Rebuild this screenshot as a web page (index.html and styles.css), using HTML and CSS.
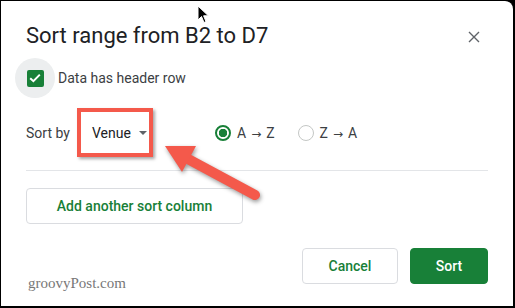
FILE: index.html
```html
<!DOCTYPE html>
<html lang="en">

<head>
    <meta charset="UTF-8">
    <meta name="viewport" content="width=device-width, initial-scale=1.0">
    <title>Sort range</title>
    <link rel="stylesheet" href="styles.css">
</head>

<body>
    <div class="dialog">
        <div class="header">
            <h1>Sort range from B2 to D7</h1>
            <svg class="close" width="12" height="12" viewBox="0 0 12 12">
                <path d="M1 1 L11 11 M11 1 L1 11" stroke="#5f6368" stroke-width="1.4" fill="none" />
            </svg>
        </div>

        <label class="check-row">
            <span class="halo">
                <span class="checkbox">
                    <svg width="12" height="10" viewBox="0 0 12 10">
                        <path d="M1.2 5.2 L4.4 8.2 L10.8 1.6" stroke="#fff" stroke-width="2" fill="none" />
                    </svg>
                </span>
            </span>
            Data has header row
        </label>

        <div class="sort-row">
            <span class="sort-label">Sort by</span>
            <div class="dropdown">
                <span>Venue</span>
                <span class="caret"></span>
            </div>
            <div class="radios">
                <span class="radio checked"></span>
                <span class="radio-label">A<span class="arrow">→</span>Z</span>
                <span class="radio"></span>
                <span class="radio-label">Z<span class="arrow">→</span>A</span>
            </div>
        </div>

        <hr class="divider">

        <button class="btn add">Add another sort column</button>

        <div class="footer">
            <button class="btn">Cancel</button>
            <button class="btn primary">Sort</button>
        </div>

        <span class="watermark">groovyPost.com</span>

        <svg class="annotation" width="515" height="308" viewBox="0 0 515 308">
            <line x1="255" y1="195" x2="188" y2="159" stroke="#f4594b" stroke-width="10" stroke-linecap="round" />
            <polygon points="165,146 196,146 182,172" fill="#f4594b" />
        </svg>

        <svg class="cursor" width="14" height="20" viewBox="0 0 14 20">
            <path d="M1 1 L1 15 L4.5 11.5 L7 17.5 L9 16.6 L6.6 10.8 L11.4 10.8 Z" fill="#000" stroke="#fff" stroke-width="1" />
        </svg>
    </div>
</body>

</html>
```

FILE: styles.css
```css
body {
    margin: 0;
    background-color: #000;
    font-family: 'Roboto', 'Liberation Sans', sans-serif;
    color: #3c4043;
}

.dialog {
    position: relative;
    box-sizing: border-box;
    width: 512px;
    height: 305px;
    margin: 1px 2px 2px 1px;
    padding: 20px 25px 0 25px;
    background-color: #fff;
    border-top-right-radius: 8px;
    overflow: hidden;
}

.header {
    display: flex;
    justify-content: space-between;
    align-items: center;
}

h1 {
    margin: 0;
    font-size: 22px;
    line-height: 30px;
    font-weight: 400;
    color: #202124;
}

.close {
    margin-right: 8px;
    margin-top: 2px;
}

.check-row {
    display: flex;
    align-items: center;
    margin: 7px 0 0 -11px;
    font-size: 14px;
    color: #3c4043;
}

.halo {
    display: flex;
    justify-content: center;
    align-items: center;
    width: 40px;
    height: 40px;
    border-radius: 50%;
    background-color: #eceeef;
    margin-right: 3px;
}

.checkbox {
    display: flex;
    justify-content: center;
    align-items: center;
    width: 17px;
    height: 17px;
    border-radius: 2px;
    background-color: #188038;
}

.sort-row {
    display: flex;
    align-items: center;
    margin-top: 10px;
    font-size: 14px;
}

.sort-label {
    width: 51px;
}

.dropdown {
    display: flex;
    align-items: center;
    box-sizing: border-box;
    width: 76px;
    height: 49px;
    padding-left: 11px;
    border: 4px solid #f4594b;
    box-shadow: 2px 2px 3px rgba(0, 0, 0, 0.35);
    color: #202124;
    font-size: 14px;
}

.caret {
    margin-left: 8px;
    border-left: 4px solid transparent;
    border-right: 4px solid transparent;
    border-top: 4px solid #5f6368;
}

.radios {
    display: flex;
    align-items: center;
    margin-left: 62px;
    color: #3c4043;
}

.radio {
    box-sizing: border-box;
    width: 16px;
    height: 16px;
    border-radius: 50%;
    border: 1.5px solid #c4c7c5;
    margin-right: 6px;
}

.radio.checked {
    border: 2px solid #188038;
    background: radial-gradient(circle, #188038 0 4px, transparent 4.5px);
}

.radio-label {
    margin-right: 23px;
}

.arrow {
    font-family: 'DejaVu Sans', sans-serif;
    font-size: 12px;
    margin: 0 5px;
}

.divider {
    margin: 13px 0 0 0;
    border: none;
    border-top: 1px solid #e3e5e8;
}

.btn {
    box-sizing: border-box;
    height: 36px;
    padding: 0 24px;
    border: 1px solid #dadce0;
    border-radius: 4px;
    background-color: #fff;
    color: #188038;
    font-family: 'Roboto', 'Liberation Sans', sans-serif;
    font-size: 14px;
    font-weight: 500;
}

.add {
    display: block;
    width: 217px;
    margin-top: 17px;
    padding: 0;
}

.footer {
    display: flex;
    justify-content: flex-end;
    gap: 12px;
    margin-top: 24px;
}

.footer .btn {
    width: 96px;
}

.footer .primary {
    width: 78px;
    background-color: #188038;
    border-color: #188038;
    color: #fff;
}

.watermark {
    position: absolute;
    left: 27px;
    bottom: 14px;
    font-family: 'Liberation Serif', serif;
    font-size: 15px;
    color: #777;
}

.annotation {
    position: absolute;
    left: -1px;
    top: -1px;
    filter: drop-shadow(1px 2px 2px rgba(0, 0, 0, 0.4));
}

.cursor {
    position: absolute;
    left: 196px;
    top: 4px;
}
```
